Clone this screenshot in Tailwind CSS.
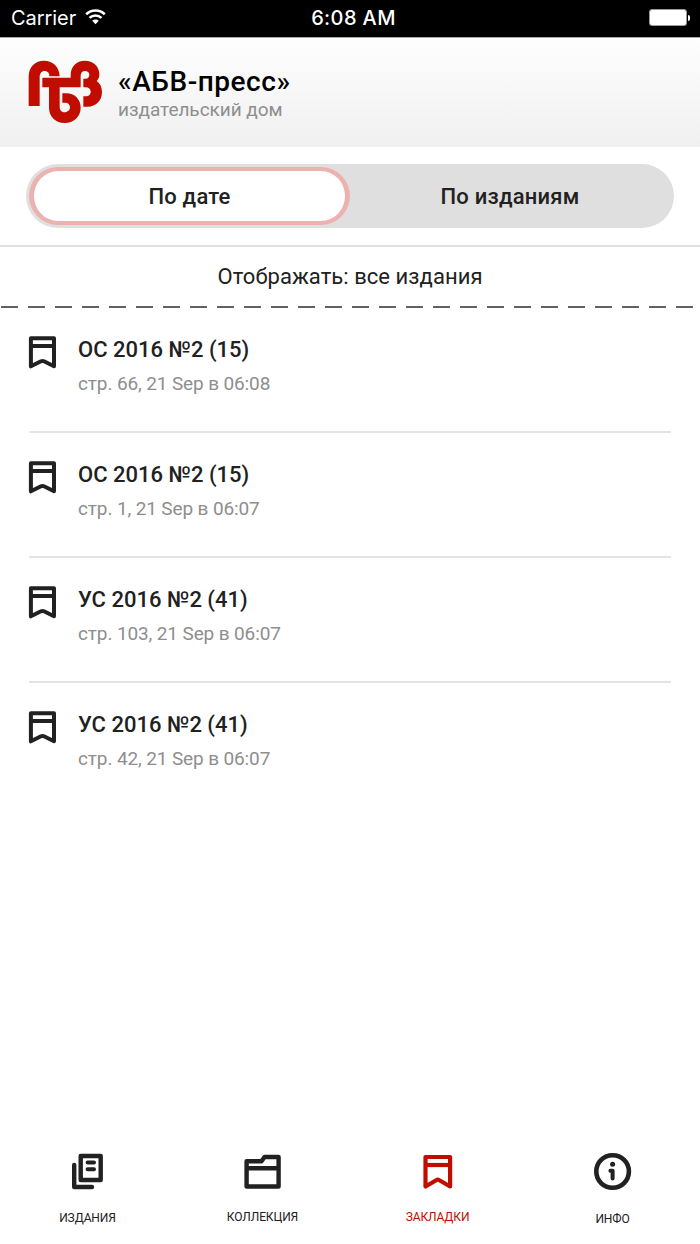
<!DOCTYPE html>
<html lang="ru">
<head>
    <meta charset="UTF-8">
    <meta name="viewport" content="width=device-width, initial-scale=1.0">
    <title>АБВ-пресс - Закладки</title>
    <script src="https://cdn.jsdelivr.net/npm/@tailwindcss/browser@4"></script>
</head>
<body class="bg-white font-[Roboto,sans-serif] text-[#212121]">
<div class="w-[700px] h-[1244px] flex flex-col overflow-hidden">

    <!-- status bar -->
    <div class="h-[37px] shrink-0 bg-black text-white font-[Inter,sans-serif] text-[20px] leading-[36px] grid grid-cols-3 pl-[11px] pr-[10px]">
        <div class="flex items-center -mt-px">
            <span class="-tracking-[0.05px]">Carrier</span>
            <svg class="ml-[9px] -mt-[2px]" width="21" height="16" viewBox="0 0 21 16" fill="none" stroke="#fff" stroke-width="2.6">
                <path d="M1.2 5.3C6.5 .2 14.5 .2 19.8 5.3"/>
                <path d="M4.5 8.9C8 5.6 13 5.6 16.5 8.9"/>
                <path d="M7.2 11.8C9 9.9 12 9.9 13.8 11.8L10.5 15.3Z" fill="#fff" stroke="none"/>
            </svg>
        </div>
        <div class="text-center font-medium tracking-[0.4px] pl-[6px]">6:08 AM</div>
        <div class="flex items-center justify-end">
            <div class="w-[38px] h-[17px] -mt-[2px] rounded-[3px] bg-white border border-[#999]"></div>
            <div class="w-[2px] h-[6px] -mt-[2px] ml-px rounded-r-full bg-white"></div>
        </div>
    </div>

    <!-- header -->
    <header class="h-[110px] shrink-0 flex items-start pl-[28px] pt-[22px] border-t border-[#aaa] bg-linear-to-b from-[#fefefe] to-[#f0f0f0]">
        <svg width="75" height="64" viewBox="84 180 225 192" fill="#c00d00">
            <path d="M86 318V230C86 200 106 182 132 182C159 182 178 201 179 229H148C149 220 143 213 134 213C124 213 119 221 119 231V318Z"/>
            <path d="M127 233H212V225C212 199 230 182 254 182C280 182 298 199 298 223C298 233 295 239 290 243C300 250 306 262 306 276C306 302 288 320 263 320H250V289H258C267 289 272 283 272 275C272 267 266 262 257 262H250V236H257C264 236 268 230 268 224C268 217 262 213 255 213C247 213 242 219 242 227V262H179V322C179 331 186 337 194 337C203 337 210 330 210 322C210 314 204 308 196 308H187V280H199C224 280 242 298 242 323C242 350 221 369 194 369C167 369 147 350 147 323V262H127Z"/>
        </svg>
        <div class="ml-[15px] pt-[6px]">
            <h1 class="text-[28px] leading-[32px] font-medium tracking-[0.55px] text-black whitespace-nowrap">«АБВ-пресс»</h1>
            <p class="text-[19px] leading-[24px] -tracking-[0.05px] text-[#8e8e8e] whitespace-nowrap">издательский дом</p>
        </div>
    </header>

    <!-- tabs -->
    <div class="h-[100px] shrink-0 px-[26px] pt-[17px] border-b-2 border-[#e0e0e0]">
        <div class="h-[64px] rounded-full bg-[#dfdfdf] flex items-center pl-[3px] text-[22px] font-medium tracking-[0.2px]">
            <button class="w-[321px] h-[58px] rounded-full bg-white border-x-5 border-y-4 border-[#ecb2b0]">По дате</button>
            <button class="flex-1 pr-[4px]">По изданиям</button>
        </div>
    </div>

    <!-- filter -->
    <div class="h-[59px] shrink-0 text-center text-[22px] leading-[60px] tracking-[0.05px]">Отображать: все издания</div>
    <svg class="h-[2px] w-full shrink-0" viewBox="0 0 700 2">
        <line x1="1" y1="1" x2="700" y2="1" stroke="#616161" stroke-width="2" stroke-dasharray="17 10"/>
    </svg>

    <!-- bookmarks -->
    <ul class="mx-[29px] divide-y-2 divide-[#e4e4e4]">
        <li class="h-[125px] flex pt-[28px]">
            <svg class="-ml-px" width="29" height="34" viewBox="0 0 29 34" fill="none" stroke="#212121" stroke-width="4" stroke-linejoin="round">
                <path d="M2.9 2.3H26V30.3L16 25.3Q14.5 24.6 13 25.3L2.9 30.3Z"/><path d="M2.9 10H26"/>
            </svg>
            <div class="ml-[21px] mt-px">
                <h2 class="text-[22px] leading-[26px] font-medium">ОС 2016 №2 (15)</h2>
                <p class="mt-[9px] text-[19px] leading-[24px] -tracking-[0.12px] text-[#8e8e8e]">стр. 66, 21 Sep в 06:08</p>
            </div>
        </li>
        <li class="h-[125px] flex pt-[28px]">
            <svg class="-ml-px" width="29" height="34" viewBox="0 0 29 34" fill="none" stroke="#212121" stroke-width="4" stroke-linejoin="round">
                <path d="M2.9 2.3H26V30.3L16 25.3Q14.5 24.6 13 25.3L2.9 30.3Z"/><path d="M2.9 10H26"/>
            </svg>
            <div class="ml-[21px] mt-px">
                <h2 class="text-[22px] leading-[26px] font-medium">ОС 2016 №2 (15)</h2>
                <p class="mt-[9px] text-[19px] leading-[24px] -tracking-[0.12px] text-[#8e8e8e]">стр. 1, 21 Sep в 06:07</p>
            </div>
        </li>
        <li class="h-[125px] flex pt-[28px]">
            <svg class="-ml-px" width="29" height="34" viewBox="0 0 29 34" fill="none" stroke="#212121" stroke-width="4" stroke-linejoin="round">
                <path d="M2.9 2.3H26V30.3L16 25.3Q14.5 24.6 13 25.3L2.9 30.3Z"/><path d="M2.9 10H26"/>
            </svg>
            <div class="ml-[21px] mt-px">
                <h2 class="text-[22px] leading-[26px] font-medium">УС 2016 №2 (41)</h2>
                <p class="mt-[9px] text-[19px] leading-[24px] -tracking-[0.12px] text-[#8e8e8e]">стр. 103, 21 Sep в 06:07</p>
            </div>
        </li>
        <li class="h-[125px] flex pt-[28px]">
            <svg class="-ml-px" width="29" height="34" viewBox="0 0 29 34" fill="none" stroke="#212121" stroke-width="4" stroke-linejoin="round">
                <path d="M2.9 2.3H26V30.3L16 25.3Q14.5 24.6 13 25.3L2.9 30.3Z"/><path d="M2.9 10H26"/>
            </svg>
            <div class="ml-[21px] mt-px">
                <h2 class="text-[22px] leading-[26px] font-medium">УС 2016 №2 (41)</h2>
                <p class="mt-[9px] text-[19px] leading-[24px] -tracking-[0.12px] text-[#8e8e8e]">стр. 42, 21 Sep в 06:07</p>
            </div>
        </li>
    </ul>

    <!-- bottom nav -->
    <nav class="mt-auto h-[94px] shrink-0 grid grid-cols-4 text-[12px] leading-[16px] -tracking-[0.1px]">
        <a class="flex flex-col items-center">
            <svg width="40" height="42" viewBox="0 0 40 42" fill="none" stroke="#212121" stroke-width="4.4" stroke-linecap="round" stroke-linejoin="round">
                <rect x="12.7" y="6" width="20" height="24"/>
                <path d="M6.2 15V37H24"/>
                <path d="M19.6 12.5H26M19.6 19.2H26" stroke-width="4"/>
            </svg>
            <span class="mt-[18px]">ИЗДАНИЯ</span>
        </a>
        <a class="flex flex-col items-center">
            <svg width="40" height="42" viewBox="0 0 40 42" fill="none" stroke="#212121" stroke-width="4.4" stroke-linejoin="round">
                <path d="M3.6 11.2H18.5L21.5 7H35.6V36.5H3.6Z"/><path d="M3.6 18.2H35.6"/>
            </svg>
            <span class="mt-[17px]">КОЛЛЕКЦИЯ</span>
        </a>
        <a class="flex flex-col items-center text-[#c00d00]">
            <svg width="40" height="42" viewBox="0 0 40 42" fill="none" stroke="#c00d00" stroke-width="4.2" stroke-linejoin="round">
                <path d="M7.5 7H32.1V36.5L21 30Q19.8 29.2 18.6 30L7.5 36.5Z"/><path d="M7.5 15H32.1"/>
            </svg>
            <span class="mt-[17px]">ЗАКЛАДКИ</span>
        </a>
        <a class="flex flex-col items-center">
            <svg width="40" height="42" viewBox="0 0 40 42" fill="none" stroke="#212121" stroke-width="4" stroke-linecap="round" stroke-linejoin="round">
                <circle cx="19.6" cy="21.5" r="16.3" stroke-width="4.6"/>
                <path d="M17.4 20.7H19.6V28.6"/>
                <circle cx="19.6" cy="14.3" r="2.5" fill="#212121" stroke="none"/>
            </svg>
            <span class="mt-[19px]">ИНФО</span>
        </a>
    </nav>
</div>
</body>
</html>
